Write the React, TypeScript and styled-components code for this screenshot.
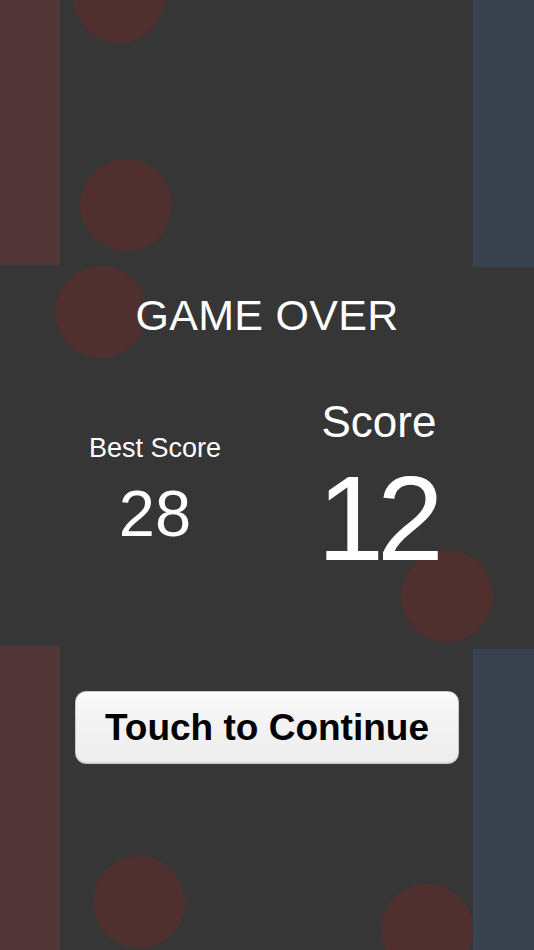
import React from "react";
import styled, { createGlobalStyle } from "styled-components";

const GlobalStyle = createGlobalStyle`
  html, body {
    margin: 0;
    padding: 0;
    background: #363636;
  }
  #root {
    width: 534px;
    height: 950px;
  }
`;

const Screen = styled.div`
  position: relative;
  width: 534px;
  height: 950px;
  overflow: hidden;
  background: #363636;
  font-family: "Liberation Sans", Arial, sans-serif;
  color: #ffffff;
`;

const Playfield = styled.div`
  position: absolute;
  inset: 0;
  pointer-events: none;
`;

const Wall = styled.div<{ $side: "left" | "right"; $top: number; $height: number }>`
  position: absolute;
  ${(p) => (p.$side === "left" ? "left: 0; width: 60px;" : "left: 473px; width: 61px;")}
  top: ${(p) => p.$top}px;
  height: ${(p) => p.$height}px;
  background: ${(p) => (p.$side === "left" ? "#533637" : "#38434f")};
`;

const Ball = styled.div<{ $x: number; $y: number }>`
  position: absolute;
  width: 92px;
  height: 92px;
  border-radius: 50%;
  background: #502f2f;
  left: ${(p) => p.$x - 46}px;
  top: ${(p) => p.$y - 46}px;
`;

const Overlay = styled.main`
  position: relative;
  display: flex;
  flex-direction: column;
  align-items: center;
  padding-top: 294px;
`;

const Title = styled.h1`
  margin: 0;
  font-size: 43px;
  line-height: 43px;
  font-weight: 400;
  letter-spacing: 0.3px;
`;

const Stats = styled.section`
  margin-top: 63px;
  width: 448px;
  display: grid;
  grid-template-columns: 1fr 1fr;
  align-items: start;
`;

const StatColumn = styled.div<{ $offset: number; $gap: number }>`
  display: flex;
  flex-direction: column;
  align-items: center;
  margin-top: ${(p) => p.$offset}px;
  gap: ${(p) => p.$gap}px;
`;

const StatLabel = styled.div<{ $size: number }>`
  font-size: ${(p) => p.$size}px;
  line-height: ${(p) => p.$size}px;
  white-space: nowrap;
`;

const StatValue = styled.div<{ $size: number; $tight?: number }>`
  font-size: ${(p) => p.$size}px;
  line-height: ${(p) => p.$size}px;
  letter-spacing: ${(p) => -(p.$tight ?? 0)}px;
  padding-right: ${(p) => ((p.$tight ?? 0) > 0 ? 4 : 0)}px;
`;

const ContinueButton = styled.button`
  margin-top: 113px;
  width: 384px;
  height: 73px;
  display: flex;
  align-items: center;
  justify-content: center;
  padding: 0;
  border: 1px solid #c9c9c9;
  border-radius: 11px;
  background: linear-gradient(#fbfbfb, #f3f3f3 40%, #ededed);
  box-shadow: inset 0 1px 0 #ffffff, inset 0 -1px 1px #d6d6d6;
  color: #000000;
  font-family: "Liberation Sans", Arial, sans-serif;
  font-weight: 700;
  font-size: 37px;
  line-height: 37px;
  cursor: pointer;
`;

const walls = [
  { side: "left" as const, top: 0, height: 265 },
  { side: "left" as const, top: 646, height: 304 },
  { side: "right" as const, top: 0, height: 267 },
  { side: "right" as const, top: 649, height: 301 },
];

const balls = [
  { x: 119, y: -3 },
  { x: 126, y: 205 },
  { x: 101, y: 312 },
  { x: 447, y: 596 },
  { x: 139, y: 902 },
  { x: 427, y: 930 },
];

export default function App() {
  return (
    <>
      <GlobalStyle />
      <Screen>
        <Playfield>
          {walls.map((w, i) => (
            <Wall key={i} $side={w.side} $top={w.top} $height={w.height} />
          ))}
          {balls.map((b, i) => (
            <Ball key={i} $x={b.x} $y={b.y} />
          ))}
        </Playfield>
        <Overlay>
          <Title>GAME OVER</Title>
          <Stats>
            <StatColumn $offset={35} $gap={19}>
              <StatLabel $size={27}>Best Score</StatLabel>
              <StatValue $size={65}>28</StatValue>
            </StatColumn>
            <StatColumn $offset={0} $gap={14}>
              <StatLabel $size={44}>Score</StatLabel>
              <StatValue $size={120} $tight={7}>12</StatValue>
            </StatColumn>
          </Stats>
          <ContinueButton>Touch to Continue</ContinueButton>
        </Overlay>
      </Screen>
    </>
  );
}
